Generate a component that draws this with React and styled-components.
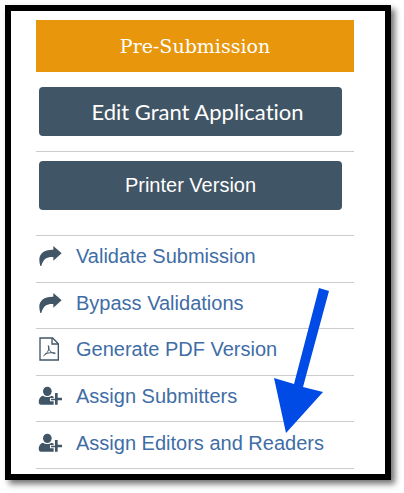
import React from "react";
import styled, { createGlobalStyle } from "styled-components";

const links = [
  { title: "Validate Submission", icon: "share" },
  { title: "Bypass Validations", icon: "share" },
  { title: "Generate PDF Version", icon: "pdf" },
  { title: "Assign Submitters", icon: "user" },
  { title: "Assign Editors and Readers", icon: "user" },
];

function Icon({ name }) {
  if (name === "share") {
    return (
      <IconSvg viewBox="0 0 72 72" aria-hidden="true">
        <path d="M46 6 L71 28 L46 50 V39 C28 38 16 43 10 66 H7 C-3 34 12 16 46 17 Z" />
      </IconSvg>
    );
  }
  if (name === "pdf") {
    return (
      <IconSvg viewBox="0 0 72 72" aria-hidden="true">
        <g fill="none" stroke="currentColor" strokeWidth="4">
          <path d="M6 3 H44 L61 20 V69 H6 Z" />
          <path d="M42 4 V21 H60" />
          <path strokeWidth="3" d="M31 25 C30 38 39 48 52 50 M32 27 C35 38 28 48 16 57 M20 52 C30 47 40 46 52 48" />
        </g>
      </IconSvg>
    );
  }
  return (
    <IconSvg viewBox="0 0 72 72" aria-hidden="true">
      <ellipse cx="28" cy="22" rx="13" ry="14" />
      <path d="M15 35 C21 40 35 40 41 35 L47 38 V42 H36 V52 H47 V62 H9 C-2 62 1 38 15 35 Z" />
      <path d="M51 27 H59 V41 H72 V49 H59 V62 H51 V49 H39 V44 H51 Z" />
    </IconSvg>
  );
}

function App() {
  return (
    <Page>
      <GlobalStyle />
      <Frame>
        <Title>Pre-Submission</Title>
        <Action $soft>Edit Grant Application</Action>
        <Divider />
        <Action>Printer Version</Action>
        <List>
          {links.map((e) => (
            <Item key={e.title}>
              <ItemLink href="#">
                <Icon name={e.icon} />
                {e.title}
              </ItemLink>
            </Item>
          ))}
        </List>
        <Pointer viewBox="0 0 59 148" aria-hidden="true">
          <path d="M47 1 L57 4 L31 100 L51 105 L14 146 L2 91 L22 97 Z" />
        </Pointer>
      </Frame>
    </Page>
  );
}

const GlobalStyle = createGlobalStyle`
  * {
    box-sizing: border-box;
  }
  body {
    margin: 0;
    background: #fff;
  }
`;

const Page = styled.div`
  display: flex;
  min-height: 100vh;
  padding: 5px 13px 13px 5px;
`;

const Frame = styled.main`
  position: relative;
  flex: 1;
  display: flex;
  flex-direction: column;
  padding: 9px 31px 5px 25px;
  border: 6px solid #000;
  background: #fff;
  box-shadow: 4px 4px 6px rgba(0, 0, 0, 0.55);
  font-family: "Liberation Sans", Arial, sans-serif;
`;

const Title = styled.h1`
  margin: 0 0 15px;
  background: #e8960c;
  color: #fff;
  font-family: "DejaVu Serif", serif;
  font-size: 19px;
  font-weight: 400;
  line-height: 52px;
  text-align: center;
`;

const Action = styled.button`
  height: 49px;
  margin: 0 12px 0 3px;
  padding: ${(p) => (p.$soft ? "0 0 0 14px" : "0")};
  border: 0;
  border-radius: 4px;
  background: #405565;
  color: #fff;
  font-family: ${(p) => (p.$soft ? "Lato, sans-serif" : "inherit")};
  font-size: ${(p) => (p.$soft ? "22px" : "20px")};
  font-variant-ligatures: none;
`;

const Divider = styled.hr`
  width: 100%;
  margin: 15px 0 9px;
  border: 0;
  border-top: 1px solid #ccc;
`;

const List = styled.ul`
  flex: 1;
  display: flex;
  flex-direction: column;
  margin: 25px 0 0;
  padding: 0;
  border-top: 1px solid #ccc;
  list-style: none;
`;

const Item = styled.li`
  flex: 1;
  display: flex;
  border-bottom: 1px solid #ccc;
`;

const ItemLink = styled.a`
  flex: 1;
  display: flex;
  align-items: center;
  gap: 14px;
  padding: 8px 0 13px 2px;
  color: #3f6da5;
  font-size: 20px;
  line-height: 24px;
  text-decoration: none;
  white-space: nowrap;
`;

const IconSvg = styled.svg`
  flex: none;
  width: 24px;
  height: 24px;
  color: #405565;
  fill: currentColor;
`;

const Pointer = styled.svg`
  position: absolute;
  right: 54px;
  bottom: 39px;
  width: 59px;
  height: 148px;
  fill: #004be6;
  pointer-events: none;
`;

export default App;
